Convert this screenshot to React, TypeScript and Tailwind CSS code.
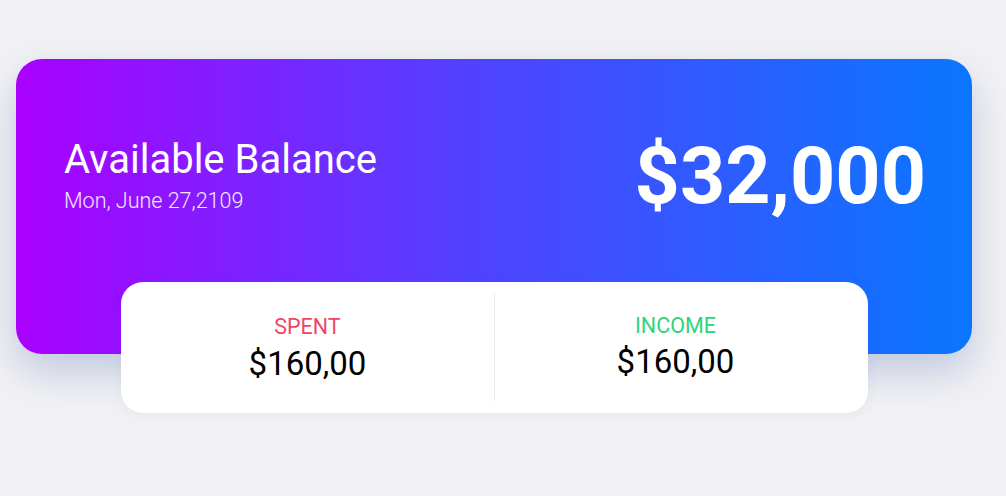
import React from 'react';

type Stat = {
  label: string;
  amount: string;
  color: string;
};

const stats: Stat[] = [
  { label: 'SPENT', amount: '$160,00', color: 'text-[#ef4567]' },
  { label: 'INCOME', amount: '$160,00', color: 'text-[#2fd47b]' },
];

export default function App() {
  return (
    <div className="w-full h-[496px] bg-[#f2f2f4] font-['Roboto',sans-serif] overflow-hidden">
      <div className="flex flex-col pt-[59px] pl-4">
        {/* balance card */}
        <div className="w-[956px] h-[295px] rounded-[26px] bg-[linear-gradient(90deg,#aa00ff_0%,#4d45ff_50%,#0a76ff_100%)] shadow-[0_18px_40px_rgba(60,95,170,0.28)] flex items-start justify-between pt-[78px] pl-12 pr-[46px]">
          <div className="flex flex-col">
            <h2 className="text-[40px] leading-[46px] font-normal text-white">Available Balance</h2>
            <p className="text-[21.5px] leading-6 font-light text-white/90 mt-1.5">Mon, June 27,2109</p>
          </div>
          <div className="text-[79px] leading-[80px] font-bold text-white mt-[-1px]">$32,000</div>
        </div>

        {/* spent / income */}
        <div className="w-[747px] h-[131px] -mt-[72px] ml-[105px] bg-white rounded-[22px] flex shadow-[0_4px_14px_rgba(60,95,170,0.06)]">
          <div className="w-[373px] flex flex-col items-center pt-[33px]">
            <span className={`text-[21.5px] leading-6 ${stats[0].color}`}>{stats[0].label}</span>
            <span className="text-[33px] leading-[38px] text-black mt-[6px]">{stats[0].amount}</span>
          </div>
          <div className="w-px my-3 bg-[#ebebee]" />
          <div className="flex-1 flex flex-col items-center pt-[32px] pr-3">
            <span className={`text-[21.5px] leading-6 ${stats[1].color}`}>{stats[1].label}</span>
            <span className="text-[33px] leading-[38px] text-black mt-[5px]">{stats[1].amount}</span>
          </div>
        </div>
      </div>
    </div>
  );
}
